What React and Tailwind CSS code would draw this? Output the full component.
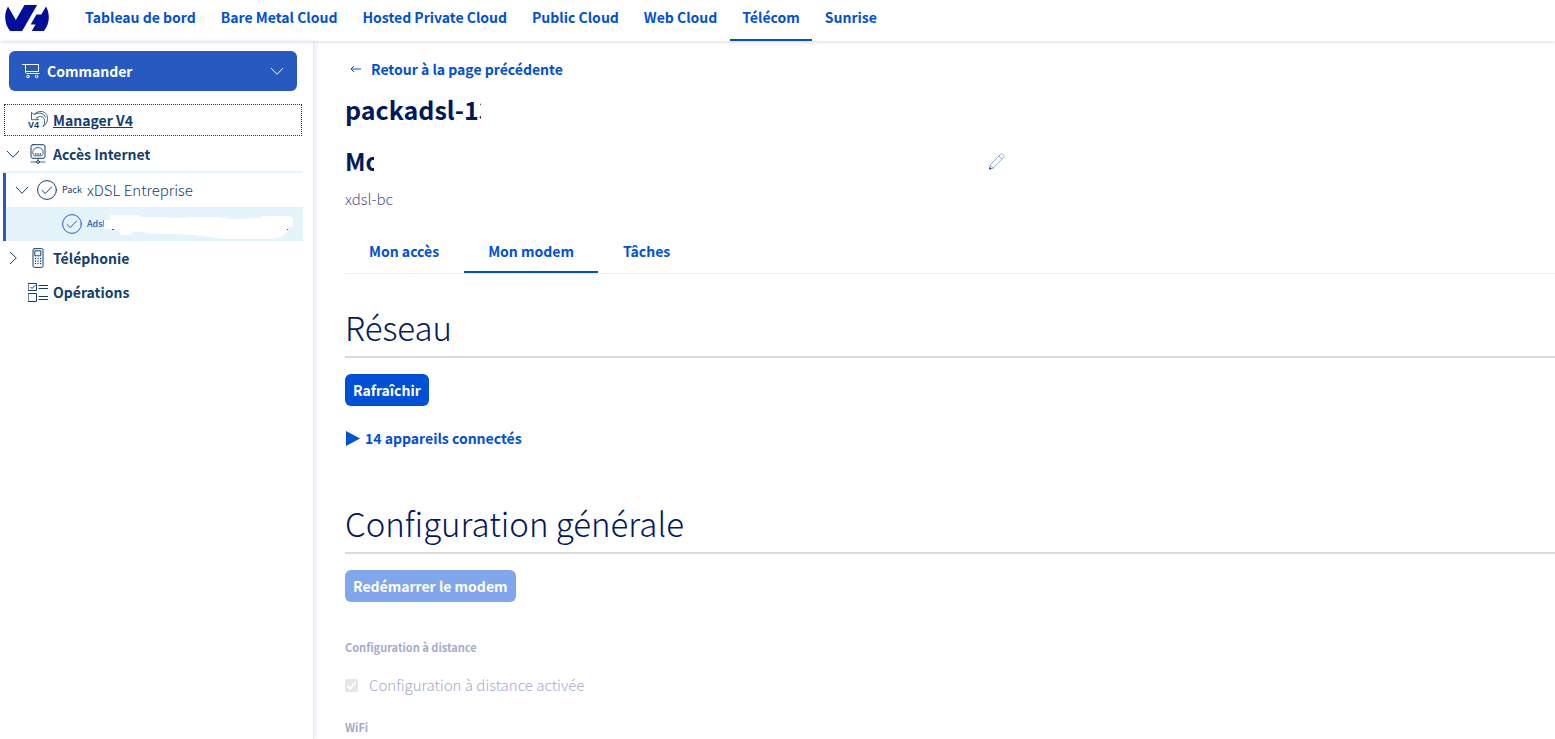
import clsx from 'clsx';

const universes = [
  'Tableau de bord',
  'Bare Metal Cloud',
  'Hosted Private Cloud',
  'Public Cloud',
  'Web Cloud',
  'Télécom',
  'Sunrise',
];

const tabs = ['Mon accès', 'Mon modem', 'Tâches'];

function Logo() {
  return (
    <svg viewBox="0 4.85 24 14.3" className="h-[26px] w-11" fill="#000e9c" role="img" aria-label="OVHcloud">
      <path d="M19.881 10.095l2.563-4.45C23.434 7.389 24 9.404 24 11.555c0 2.88-1.017 5.523-2.71 7.594h-6.62l2.04-3.541h-2.696l3.176-5.513h2.691zM17.561 4.852L9.333 19.14l.003.009H2.709C1.014 17.077 0 14.435 0 11.555c0-2.152.57-4.17 1.561-5.918L5.855 13.08 10.6 4.852z" />
    </svg>
  );
}

function Icon({ className, children }) {
  return (
    <svg
      viewBox="0 0 20 20"
      fill="none"
      stroke="currentColor"
      strokeLinecap="round"
      strokeLinejoin="round"
      className={clsx('size-5 shrink-0', className)}
      aria-hidden="true"
    >
      {children}
    </svg>
  );
}

function Chevron({ className }) {
  return (
    <svg viewBox="0 0 14 14" fill="none" stroke="currentColor" className={clsx('size-3.5 shrink-0', className)} aria-hidden="true">
      <path d="M1 4l6 6.3L13 4" />
    </svg>
  );
}

function CartIcon() {
  return (
    <Icon className="text-white">
      <path d="M1.500 3.500h3v7.500c0 1 .5 1.500 1.500 1.500h12M4.500 3.500h13v7H5" />
      <circle cx="7" cy="15.500" r="1.300" />
      <circle cx="15.500" cy="15.500" r="1.300" />
    </Icon>
  );
}

function ManagerIcon() {
  return (
    <svg viewBox="0 0 20 20" className="size-5 shrink-0" fill="none" stroke="currentColor" strokeWidth="0.8" aria-hidden="true">
      <path d="M3.500 9.700V2.300l2.400 2.200C8 2.500 10.500 1.400 13 1.500c4 .2 6.500 3 6.500 7 0 3.600-1.800 6.300-4.500 8 1.200-1.800 1.800-3.800 1.500-6-.3-2.500-2-4-4-4-1.500 0-3 .5-4.200 1.300l2.300 1.900zM6.500 4.500c4-2.500 9.500-1.500 11 3" />
      <text x="0" y="18" fill="currentColor" stroke="none" fontSize="9" fontWeight="700" fontFamily="Liberation Sans, sans-serif">V4</text>
    </svg>
  );
}

function InternetIcon() {
  return (
    <Icon>
      <rect x="3" y=".7" width="14" height="13.600" rx="2" />
      <path d="M6 11.500c-1-1-1.200-2-1.200-3.200 0-2.600 2.200-4.800 5.200-4.800s5.200 2.200 5.200 4.800c0 1.200-.2 2.200-1.200 3.200zM7.500 10.500v-1M9.200 10.500v-1M10.800 10.500v-1M12.500 10.500v-1M10 14.500v2M3 18h5.500M11.500 18H17" strokeWidth="0.8" />
      <circle cx="10" cy="18" r="1.400" />
    </Icon>
  );
}

function PhoneIcon() {
  return (
    <Icon>
      <rect x="5" y=".6" width="10" height="18.800" rx="1.500" />
      <rect x="7.200" y="2.800" width="5.600" height="5" />
      <path d="M7.500 10.500h.1M10 10.500h.1M12.500 10.500h.1M7.500 13h.1M10 13h.1M12.500 13h.1M7.500 15.500h.1M10 15.500h.1M12.500 15.500h.1" strokeWidth="1.300" />
    </Icon>
  );
}

function OperationsIcon() {
  return (
    <Icon>
      <path d="M.5 1.500h8v7h-8zM.5 11.500h8v8h-8zM11 3.500h9M11 6.500h9M11 14.500h9M11 17.500h9M2.500 5l1.500 1.500L7 3.500" />
    </Icon>
  );
}

function CheckCircle() {
  return (
    <Icon>
      <circle cx="10" cy="10" r="9.400" />
      <path d="M5 10.500l3.300 3L14.500 7" />
    </Icon>
  );
}

function PencilIcon() {
  return (
    <svg viewBox="0 0 18 18" fill="none" stroke="#8fa0cc" strokeWidth="0.9" className="size-[18px]" aria-hidden="true">
      <path d="M2 13L12.500 2.500c.8-.8 1.600-.6 2.300 0l.8.9c.7.700.7 1.500 0 2.200L5.200 16.200 1.500 17zM11 4L14.200 7.200M2 13l3.200 3.200" />
      <path d="M1 17.500l.8-2.600 1.900 1.800z" fill="#113f6d" stroke="none" />
    </svg>
  );
}

function Sidebar() {
  return (
    <aside className="w-[314px] shrink-0 border-r border-[#e6e6f5] pt-2.5 text-[#113f6d] shadow-[2px_0_4px_#ededf8]">
      <div className="pr-4 pl-[9px]">
        <button type="button" className="flex h-10 w-full items-center rounded-md bg-[#2859c0] px-3 text-[14px] font-bold text-white">
          <CartIcon />
          <span className="ml-1.5">Commander</span>
          <Chevron className="mr-px ml-auto" />
        </button>
      </div>

      <nav className="mt-3 mr-2.5 ml-[3px] text-[14px] font-bold">
        <div className="px-px py-px">
          <a href="#manager" className="flex h-8 items-center gap-[5px] border border-dotted border-[#113f6d] pl-[23px] underline">
            <ManagerIcon />
            Manager V4
          </a>
        </div>
        <a href="#internet" className="flex h-[34px] items-center pl-[3px]">
          <Chevron />
          <span className="ml-2 flex items-center gap-[5px]">
            <InternetIcon />
            Accès Internet
          </span>
        </a>
        <div className="border-t-2 border-[#e5f3fb]">
          <div className="border-l-[3px] border-[#2859c0]">
            <a href="#pack" className="flex h-[34px] items-center pl-[9px]">
              <Chevron />
              <span className="ml-2 flex items-center gap-[5px]">
                <CheckCircle />
                <span className="text-[9px] font-normal">Pack</span>
                <span className="text-[15px] font-light">xDSL Entreprise</span>
              </span>
            </a>
            <a href="#adsl" className="relative flex h-[34px] items-center gap-[5px] bg-[#e5f3fb] pl-14 text-[#2859c0]">
              <CheckCircle />
              <span className="text-[9px] font-medium">Adsl</span>
              <svg viewBox="0 0 190 24" className="absolute top-2 left-[98px] h-6 w-[190px]" fill="#fff" aria-hidden="true">
                <path d="M0 5h6V0h30v2h20l21 1 10-1h27l14 2 29-1V1h27l5 2v9h-5l-1 5-6 5-10 2h-46l-16-2-16-2-22-1H50l-12-2H30l-4 3h-9l-2-4-5-2H0z" />
                <path d="M8 14h2v1H8zM183 14h1v1h-1z" fill="#2859c0" />
              </svg>
            </a>
          </div>
        </div>
        <a href="#telephonie" className="flex h-[34px] items-center pl-[3px]">
          <Chevron className="-rotate-90" />
          <span className="ml-2 flex items-center gap-[5px]">
            <PhoneIcon />
            Téléphonie
          </span>
        </a>
        <a href="#operations" className="flex h-[34px] items-center gap-[5px] pl-[25px]">
          <OperationsIcon />
          Opérations
        </a>
      </nav>
    </aside>
  );
}

function SectionTitle({ children }) {
  return (
    <h2 className="border-b-2 border-[#d9dadb] pb-[9px] text-[33px] leading-10 font-light text-[#00185e]">{children}</h2>
  );
}

export default function App() {
  return (
    <div className="flex min-h-screen flex-col bg-white font-['Noto_Sans_CJK_SC','Noto_Sans',sans-serif] text-[14px] text-[#4d5592]">
      <header className="relative flex h-[41px] items-start pl-[5px] shadow-[0_1px_4px_#d9d9f0]">
        <a href="#home" className="mt-[5px]">
          <Logo />
        </a>
        <nav className="ml-6 flex h-full gap-px font-bold text-[#0050d7]">
          {universes.map((name) => (
            <a
              key={name}
              href="#universe"
              className={clsx('border-b-2 px-3 pt-[7px] leading-5', name === 'Télécom' ? 'border-[#0050d7]' : 'border-transparent')}
            >
              {name}
            </a>
          ))}
        </nav>
      </header>

      <div className="flex flex-1">
        <Sidebar />

        <main className="min-w-0 flex-1 pt-4 pl-[31px]">
          <a href="#back" className="inline-flex items-center gap-2 pl-1 leading-6 font-bold text-[#0050d7]">
            <svg viewBox="0 0 14 14" fill="none" stroke="currentColor" className="size-3.5" aria-hidden="true">
              <path d="M12 7H2M5 4L2 7l3 3" />
            </svg>
            Retour à la page précédente
          </a>

          <h1 className="relative mt-3 w-fit text-[25px] leading-8 font-bold whitespace-nowrap text-[#00185e]">
            packadsl-13
            <span className="absolute inset-y-0 left-[136px] w-8 bg-white" />
          </h1>

          <div className="mt-5 flex w-[661px] max-w-full items-center justify-between">
            <h2 className="relative text-[24px] leading-8 font-bold text-[#00185e]">
              Mo
              <span className="absolute inset-y-0 left-[29px] w-8 bg-white" />
            </h2>
            <button type="button" aria-label="Modifier">
              <PencilIcon />
            </button>
          </div>
          <p className="mt-2.5 text-[15px] leading-6 font-light">xdsl-bc</p>

          <div role="tablist" className="mt-5 flex gap-px border-b border-[#e8eff5] font-bold text-[#0050d7]">
            {tabs.map((tab) => (
              <button
                key={tab}
                type="button"
                role="tab"
                aria-selected={tab === 'Mon modem'}
                className={clsx('border-b-2 px-6 py-2.5 leading-5', tab === 'Mon modem' ? 'border-[#0050d7]' : 'border-transparent')}
              >
                {tab}
              </button>
            ))}
          </div>

          <section className="mt-[33px]">
            <SectionTitle>Réseau</SectionTitle>
            <button type="button" className="mt-4 h-8 rounded-md bg-[#0050d7] px-2 font-bold text-white">
              Rafraîchir
            </button>
            <details className="mt-5">
              <summary className="flex items-center gap-1 leading-6 font-bold text-[#0050d7]">
                <svg viewBox="0 0 16 16" className="size-4" fill="currentColor" aria-hidden="true">
                  <path d="M1 1l14 7.500L1 16z" />
                </svg>
                14 appareils connectés
              </summary>
            </details>
          </section>

          <section className="mt-[53px]">
            <SectionTitle>Configuration générale</SectionTitle>
            <button type="button" disabled className="mt-4 h-8 rounded-md bg-[#80a7eb] px-2 font-bold text-white">
              Redémarrer le modem
            </button>
            <h3 className="mt-[35px] text-[11px] leading-5 font-bold text-[#a6aac9]">Configuration à distance</h3>
            <label className="mt-4 flex items-center text-[15px] leading-6 font-light text-[#a6aac9]">
              <span className="relative mr-[11px] flex">
                <input type="checkbox" checked disabled readOnly className="size-[13px] appearance-none rounded-xs bg-[#e6e6e6]" />
                <svg viewBox="0 0 13 13" className="absolute inset-0 size-[13px]" fill="none" stroke="#fff" strokeWidth="2" aria-hidden="true">
                  <path d="M2.500 7l2.700 2.700L10.500 3" />
                </svg>
              </span>
              Configuration à distance activée
            </label>
            <h3 className="mt-5 text-[11px] leading-5 font-bold text-[#a6aac9]">WiFi</h3>
          </section>
        </main>
      </div>
    </div>
  );
}
